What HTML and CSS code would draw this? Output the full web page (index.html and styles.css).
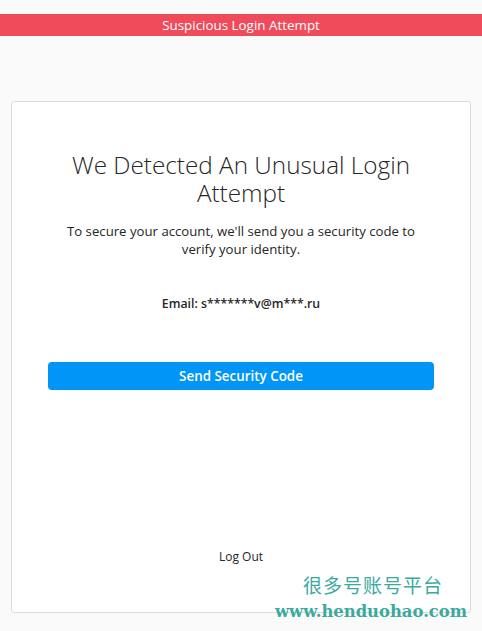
FILE: index.html
```html
<!DOCTYPE html>
<html lang="en">
<head>
    <meta charset="UTF-8">
    <meta name="viewport" content="width=device-width, initial-scale=1.0">
    <title>Suspicious Login Attempt</title>
    <link rel="stylesheet" href="styles.css">
</head>
<body>
    <div class="alert-bar">Suspicious Login Attempt</div>

    <main class="card">
        <h1>We Detected An Unusual Login Attempt</h1>
        <p class="intro">To secure your account, we'll send you a security code to verify your identity.</p>
        <p class="email">Email: s*******v@m***.ru</p>
        <button class="send-btn">Send Security Code</button>
        <a class="logout" href="#">Log Out</a>
    </main>

    <div class="watermark">
        <div class="wm-cn">很多号账号平台</div>
        <div class="wm-url">www.henduohao.com</div>
    </div>
</body>
</html>
```

FILE: styles.css
```css
body {
    font-family: "Open Sans", "Noto Sans", sans-serif;
    margin: 0;
    padding: 0;
    background-color: #fafafa;
    color: #262626;
}
.alert-bar {
    margin-top: 14px;
    height: 22px;
    line-height: 22px;
    background-color: #ef4b5b;
    color: #fff;
    font-size: 13.4px;
    text-align: center;
}
.card {
    box-sizing: border-box;
    display: flex;
    flex-direction: column;
    align-items: center;
    margin: 65px 11px 0;
    height: 512px;
    padding: 49px 36px 0;
    background-color: #fff;
    border: 1px solid #dbdbdb;
    border-radius: 3px;
    text-align: center;
}
h1 {
    margin: 0;
    padding: 0 24px;
    font-size: 24.3px;
    font-weight: 300;
    line-height: 28px;
    color: #262626;
}
.intro {
    margin: 15px 0 0;
    padding: 0 12px;
    font-size: 13.2px;
    line-height: 18px;
}
.email {
    margin: 37px 0 0;
    font-size: 12.3px;
    font-weight: 600;
    line-height: 18px;
}
.send-btn {
    width: 100%;
    height: 28px;
    margin-top: 49px;
    padding: 0;
    background-color: #0095f6;
    color: #fff;
    border: none;
    border-radius: 4px;
    font-family: inherit;
    font-size: 13.4px;
    font-weight: 600;
    cursor: pointer;
}
.logout {
    margin-top: auto;
    margin-bottom: 47px;
    font-size: 12px;
    font-weight: 500;
    line-height: 16px;
    color: #262626;
    text-decoration: none;
}
.watermark {
    position: absolute;
    left: 275px;
    top: 572px;
    color: #3aa99e;
}
.wm-cn {
    margin-left: 28px;
    font-family: "Noto Sans CJK SC", sans-serif;
    font-size: 19px;
    line-height: 26px;
    letter-spacing: 1px;
}
.wm-url {
    margin-top: 2px;
    font-family: "DejaVu Serif", serif;
    font-size: 16.4px;
    font-weight: bold;
    line-height: 24px;
}
```
